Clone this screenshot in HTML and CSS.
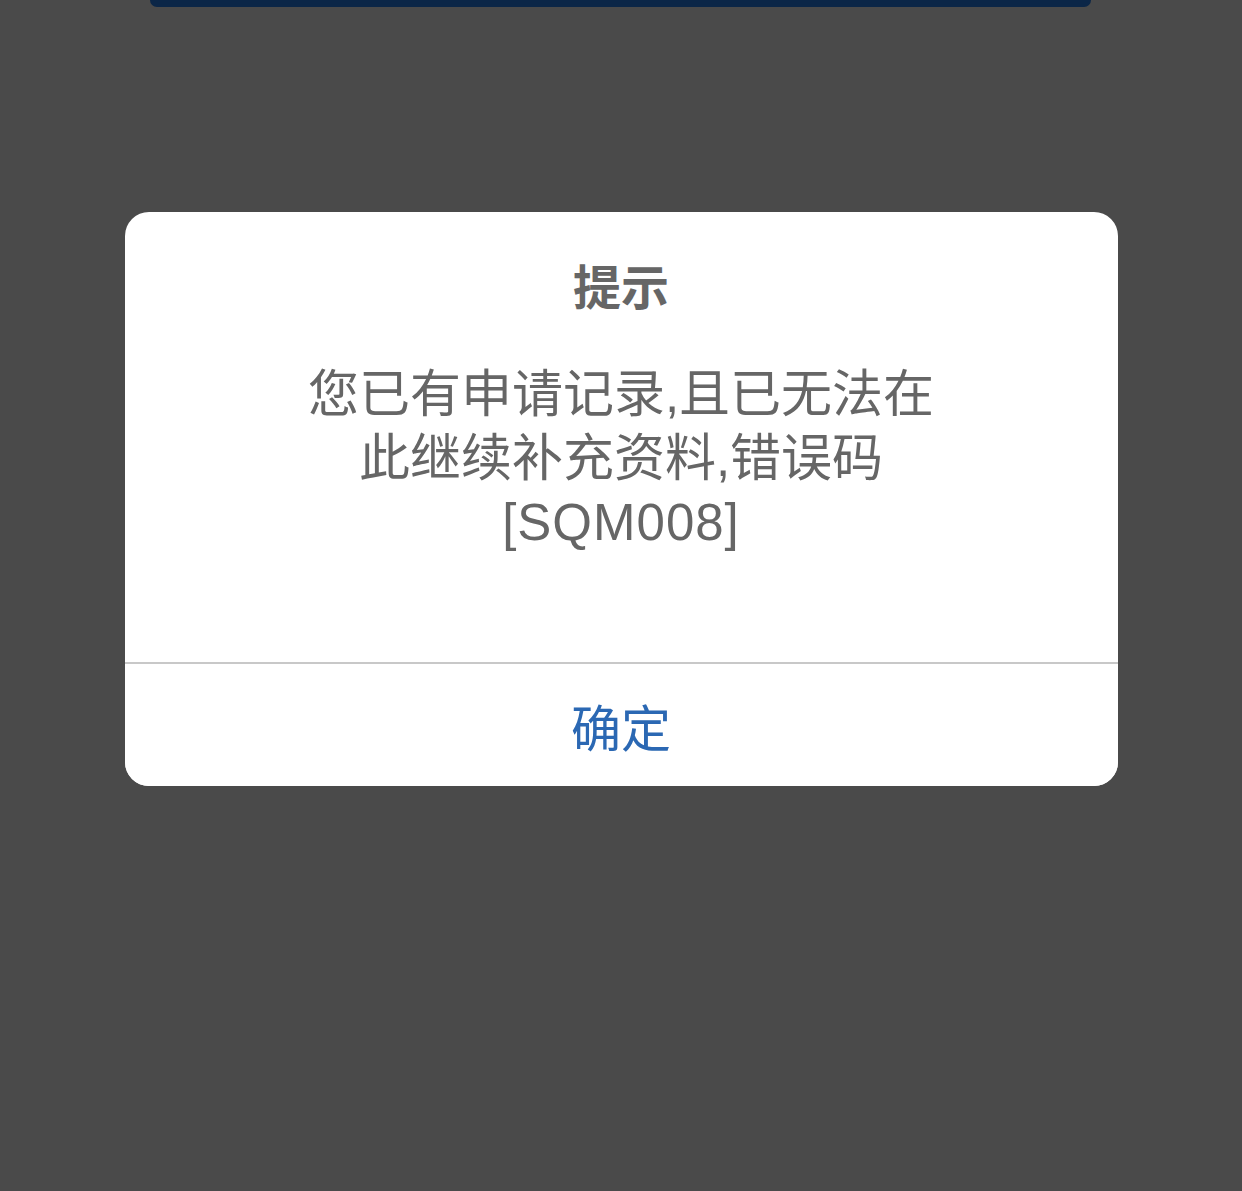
FILE: index.html
```html
<!doctype html>
<html lang="zh-CN">
<head>
  <meta charset="utf-8"/>
  <title>提示</title>
  <meta name="viewport" content="width=device-width, initial-scale=1"/>
  <link rel="stylesheet" href="styles.css">
</head>
<body>
  <div class="topbar"></div>

  <div class="dialog">
    <div class="dialog-body">
      <h2 class="dialog-title">提示</h2>
      <p class="dialog-msg">您已有申请记录,且已无法在此继续补充资料,错误码<span class="code">[SQM008]</span></p>
    </div>
    <button class="dialog-btn">确定</button>
  </div>
</body>
</html>
```

FILE: styles.css
```css
:root{--bg:#4a4a4a;--fg:#666;--blue:#2b68b3;--line:#c8c8c8}
*{box-sizing:border-box}
html,body{height:100%}
body{margin:0;background:var(--bg);font-family:"Liberation Sans","Noto Sans CJK SC",sans-serif;display:flex;flex-direction:column;align-items:center}
.topbar{width:941px;height:7px;background:#0b2647;border-radius:0 0 12px 12px;margin-left:-1px}
.dialog{margin-top:205px;width:993px;background:#fff;border-radius:24px;overflow:hidden;display:flex;flex-direction:column}
.dialog-body{padding:47px 0 107px;display:flex;flex-direction:column;align-items:center;border-bottom:2px solid var(--line)}
.dialog-title{margin:0;font-size:48px;line-height:60px;font-weight:700;color:var(--fg)}
.dialog-msg{margin:44px 0 0;width:660px;text-align:center;font-size:51px;line-height:64px;color:var(--fg)}
.code{letter-spacing:1px}
.dialog-btn{height:122px;border:none;background:#fff;font-family:inherit;font-size:50px;color:var(--blue);cursor:pointer}
```
